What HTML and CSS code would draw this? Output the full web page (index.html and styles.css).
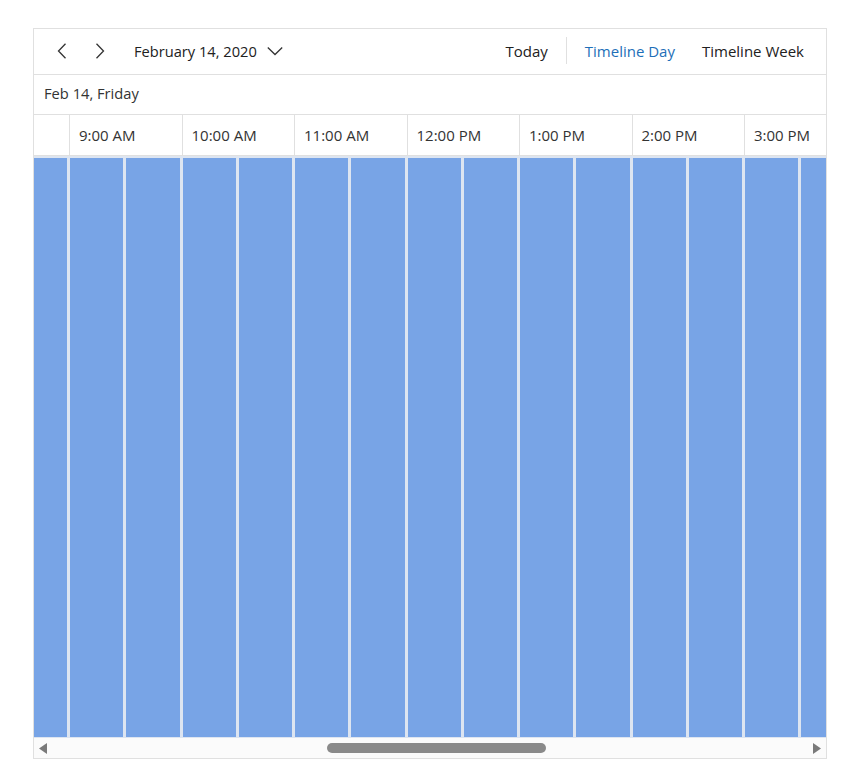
FILE: index.html
```html
<!DOCTYPE html>
<html>
<head>
<meta charset="utf-8">
<link rel="stylesheet" href="styles.css">
</head>
<body>
<div class="scheduler">
  <div class="toolbar">
    <div class="nav">
      <button class="icon-btn" aria-label="Previous">
        <svg width="10" height="16" viewBox="0 0 10 16"><path d="M8.5 0.8 L1.5 8 L8.5 15.2" fill="none" stroke="#333" stroke-width="1.3"/></svg>
      </button>
      <button class="icon-btn" aria-label="Next">
        <svg width="10" height="16" viewBox="0 0 10 16"><path d="M1.5 0.8 L8.5 8 L1.5 15.2" fill="none" stroke="#333" stroke-width="1.3"/></svg>
      </button>
      <button class="date-btn">February 14, 2020
        <svg class="caret" width="16" height="10" viewBox="0 0 16 10"><path d="M0.8 1.5 L8 8.5 L15.2 1.5" fill="none" stroke="#333" stroke-width="1.3"/></svg>
      </button>
    </div>
    <div class="views">
      <span class="view">Today</span>
      <span class="sep"></span>
      <span class="view active">Timeline Day</span>
      <span class="view">Timeline Week</span>
    </div>
  </div>
  <div class="date-row">Feb 14, Friday</div>
  <div class="time-header">
    <div class="hour first"></div>
    <div class="hour">9:00 AM</div>
    <div class="hour">10:00 AM</div>
    <div class="hour">11:00 AM</div>
    <div class="hour">12:00 PM</div>
    <div class="hour">1:00 PM</div>
    <div class="hour">2:00 PM</div>
    <div class="hour">3:00 PM</div>
  </div>
  <div class="grid">
    <div class="slot first"><div class="appt"></div></div>
    <div class="slot"><div class="appt"></div></div>
    <div class="slot"><div class="appt"></div></div>
    <div class="slot"><div class="appt"></div></div>
    <div class="slot"><div class="appt"></div></div>
    <div class="slot"><div class="appt"></div></div>
    <div class="slot"><div class="appt"></div></div>
    <div class="slot"><div class="appt"></div></div>
    <div class="slot"><div class="appt"></div></div>
    <div class="slot"><div class="appt"></div></div>
    <div class="slot"><div class="appt"></div></div>
    <div class="slot"><div class="appt"></div></div>
    <div class="slot"><div class="appt"></div></div>
    <div class="slot"><div class="appt"></div></div>
    <div class="slot"><div class="appt"></div></div>
  </div>
  <div class="hscroll">
    <svg class="arrow" width="9" height="11" viewBox="0 0 9 11"><path d="M8 0 L8 11 L0 5.5 Z" fill="#7a7a7a"/></svg>
    <div class="track"><div class="thumb"></div></div>
    <svg class="arrow" width="9" height="11" viewBox="0 0 9 11"><path d="M1 0 L1 11 L9 5.5 Z" fill="#7a7a7a"/></svg>
  </div>
</div>
</body>
</html>
```

FILE: styles.css
```css
* { box-sizing: border-box; }
body {
  margin: 0;
  background: #fff;
  font-family: "Open Sans", "Noto Sans", sans-serif;
  color: #212121;
}
.scheduler {
  margin: 28px 0 0 33px;
  width: 794px;
  height: 731px;
  border: 1px solid #e0e0e0;
  display: flex;
  flex-direction: column;
  overflow: hidden;
}
.toolbar {
  height: 46px;
  flex: none;
  border-bottom: 1px solid #e0e0e0;
  display: flex;
  align-items: center;
  justify-content: space-between;
  padding: 0 22px 2px 10px;
}
.nav { display: flex; align-items: center; }
.icon-btn {
  width: 36px;
  height: 30px;
  border: 0;
  background: none;
  padding: 0;
  display: flex;
  align-items: center;
  justify-content: center;
}
.icon-btn + .icon-btn { margin-left: 2px; }
.date-btn {
  margin-left: 16px;
  border: 0;
  background: none;
  padding: 0;
  font: inherit;
  font-size: 14.65px;
  color: #212121;
  display: flex;
  align-items: center;
}
.caret { margin-left: 10px; }
.views { display: flex; align-items: center; font-size: 15px; }
.view { color: #212121; }
.view.active { color: #1e6fb8; margin-right: 27px; }
.sep {
  width: 1px;
  height: 27px;
  background: #e0e0e0;
  margin: 0 18px;
}
.date-row {
  height: 40px;
  flex: none;
  border-bottom: 1px solid #e0e0e0;
  padding: 0 0 3px 10px;
  display: flex;
  align-items: center;
  font-size: 14.7px;
  color: #333;
}
.time-header {
  height: 41px;
  flex: none;
  border-bottom: 1px solid #e0e0e0;
  display: flex;
  font-size: 15px;
  color: #333;
}
.hour {
  flex: none;
  width: 112.5px;
  border-left: 1px solid #e0e0e0;
  padding-left: 9px;
  display: flex;
  align-items: center;
  white-space: nowrap;
}
.hour.first { width: 35px; border-left: 0; }
.grid {
  flex: 1;
  display: flex;
  background: #dde5f1;
  padding: 2px 0 1px;
}
.slot {
  flex: none;
  width: 56.25px;
  padding: 0 2px 0 1px;
}
.slot.first { width: 35px; padding-left: 0; }
.appt {
  height: 100%;
  background: #78a4e6;
}
.hscroll {
  height: 20px;
  flex: none;
  display: flex;
  align-items: center;
  background: #fbfbfb;
  padding: 0 5px;
}
.track { flex: 1; height: 10px; padding-left: 279px; }
.thumb {
  width: 219px;
  height: 10px;
  border-radius: 5px;
  background: #8a8a8a;
}
```
